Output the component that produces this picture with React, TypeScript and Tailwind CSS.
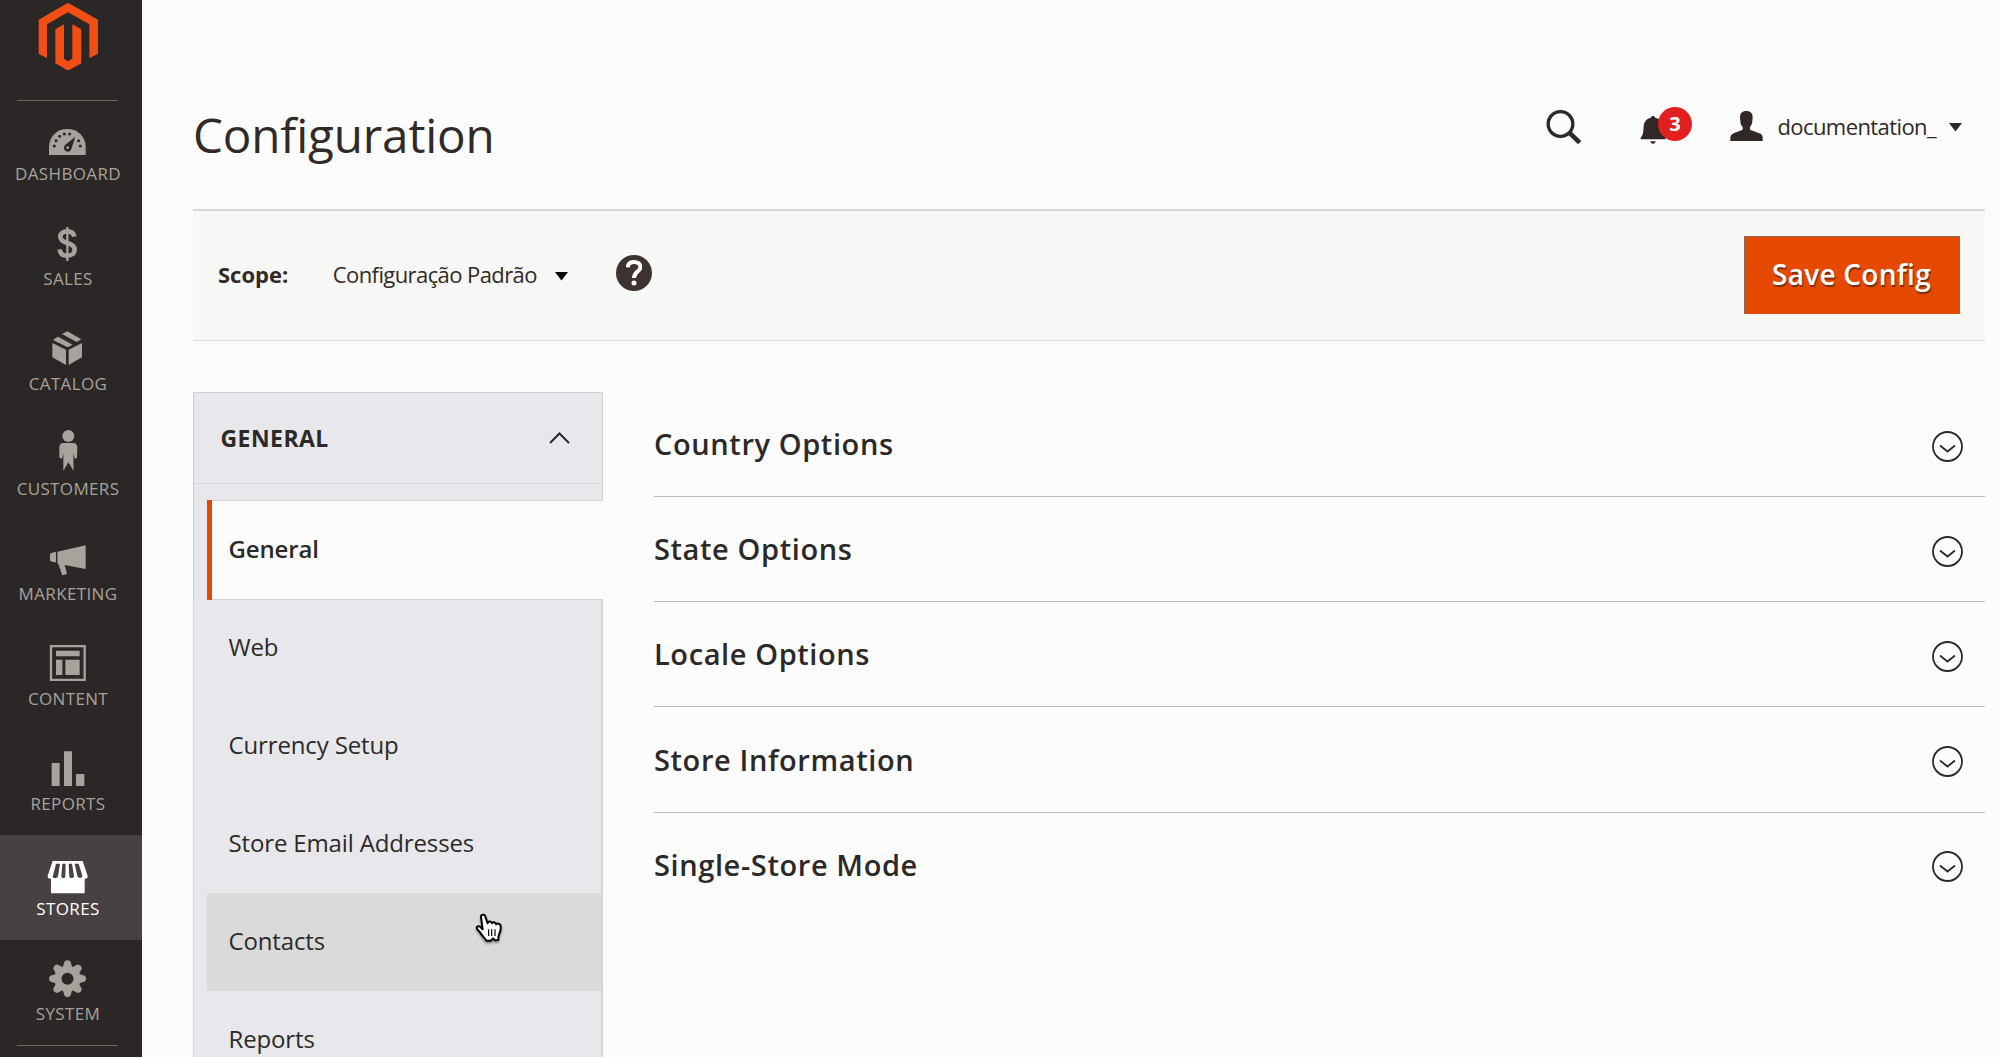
import React from 'react';

type Item = { label: string; viewBox: string; art: React.ReactNode; active?: boolean };

function Gear() {
  return (
    <g fill="currentColor" transform="translate(202.500 1076)">
      {[0, 45, 90, 135, 180, 225, 270, 315].map((a) => (
        <path key={a} transform={`rotate(${a})`} d="M-15 -32L-8.500 -52Q0 -59 8.500 -52L15 -32z" />
      ))}
      <path fillRule="evenodd" d="M0-39a39 39 0 1 0 0 78a39 39 0 1 0 0-78zM0-18a18 18 0 1 1 0 36a18 18 0 1 1 0-36z" />
    </g>
  );
}

const items: Item[] = [
  {
    label: 'DASHBOARD',
    viewBox: '144 360 120 132',
    art: (
      <>
        <path fill="currentColor" d="M147 465v-24c0-31 24-54 55-54s55 23 55 54v24z" />
        <g fill="#2a2726">
          <circle cx="163" cy="438" r="4.500" />
          <circle cx="168" cy="422" r="4.500" />
          <circle cx="179" cy="409" r="4.500" />
          <circle cx="193" cy="402" r="4.500" />
          <circle cx="209" cy="402" r="4.500" />
          <circle cx="236" cy="422" r="4.500" />
          <circle cx="241" cy="438" r="4.500" />
          <path d="M226 410l-12 37c-2 6-7 9-12 8-8-1-12-9-9-16 1-3 3-4 5-6z" />
        </g>
        <circle cx="203" cy="443" r="4" fill="currentColor" />
      </>
    ),
  },
  {
    label: 'SALES',
    viewBox: '144 675 120 132',
    art: (
      <g fill="none" stroke="currentColor">
        <path
          strokeWidth="14"
          d="M223 710c-2-11-10-16-21-16-13 0-21 6-21 16 0 11 9 15 21 19 14 4 22 9 22 20 0 11-9 18-22 18s-22-6-23-19"
        />
        <path strokeWidth="7" d="M202 681v102" />
      </g>
    ),
  },
  {
    label: 'CATALOG',
    viewBox: '144 90 120 132',
    art: (
      <g fill="currentColor">
        <path d="M157 129l41 20v46l-41-23zM246 129l-40 20v46l40-23z" />
        <path d="M202 94l42 24-14 8-44-24zM174 110l44 24-15 8-38-19-6-4z" />
      </g>
    ),
  },
  {
    label: 'CUSTOMERS',
    viewBox: '144 405 120 132',
    art: (
      <g fill="currentColor">
        <circle cx="205" cy="408" r="18" />
        <path d="M190 429h30c7 0 12 5 12 12l-1 32-7 3-4-16 1 53-16-26-15 26v-53l-4 16-8-3v-32c0-7 5-12 12-12z" />
      </g>
    ),
  },
  {
    label: 'MARKETING',
    viewBox: '144 720 120 132',
    art: (
      <path
        fill="currentColor"
        d="M150 763c0-3 8-6 18-7v31c-10 0-18-3-18-6zM172 755l85-19v71l-63-12 7 27-14 4-12-34-3-2z"
      />
    ),
  },
  {
    label: 'CONTENT',
    viewBox: '144 75 120 132',
    art: (
      <>
        <path fill="none" stroke="currentColor" strokeWidth="7" d="M153 78.500h101v101h-101z" />
        <path fill="currentColor" d="M168 92h71v17h-71zM168 119h19v46h-19zM196 119h43v46h-43z" />
      </>
    ),
  },
  {
    label: 'REPORTS',
    viewBox: '144 390 120 132',
    art: <path fill="currentColor" d="M155 429h24v69h-24zM192 394h24v104h-24zM228 462h25v36h-25z" />,
  },
  {
    label: 'STORES',
    viewBox: '144 705 120 132',
    active: true,
    art: (
      <>
        <path fill="currentColor" d="M158 723h90l15 45c1 5-4 9-9 8v44H153v-44c-6 1-11-3-10-8z" />
        <g fill="#474142">
          <path d="M168 731h12l-6 37c-1 7-14 9-16 2 0-1 0-2 1-3z" />
          <path d="M187 731h10l-1 38c0 7-12 7-12 0z" />
          <path d="M206 731h10l6 38c0 7-14 7-14 0z" />
          <path d="M224 731h12l11 36c2 8-13 9-15 1z" />
        </g>
      </>
    ),
  },
  { label: 'SYSTEM', viewBox: '144 1020 120 132', art: <Gear /> },
];

function Logo() {
  return (
    <svg className="ml-[38px] h-[70px] w-[61px]" viewBox="114 0 183 210" fill="#f04e14">
      <path d="M204 8l90 51v102l-26 14V73l-64-36-63 36v102l-25-14V59z" />
      <path d="M166 88l26-15v103l12 8 13-8V73l27 15v102l-40 22-38-22z" />
    </svg>
  );
}

function Sidebar() {
  return (
    <aside className="w-[142px] shrink-0 overflow-hidden bg-[#2a2726] text-[#a8a29d]">
      <div className="h-[100px]">
        <Logo />
      </div>
      <div className="-mb-px ml-[17px] h-px w-[101px] bg-[#74665a]" />
      {items.map((it) => (
        <div
          key={it.label}
          className={
            it.active
              ? 'flex h-[105px] flex-col items-center bg-[#474142] pr-[6px] pt-[20px] text-white'
              : 'flex h-[105px] flex-col items-center pr-[6px] pt-[20px]'
          }
        >
          <svg className="h-[44px] w-[40px] overflow-visible" viewBox={it.viewBox}>
            {it.art}
          </svg>
          <span className="text-[17px] leading-[20px] tracking-[0.35px]">{it.label}</span>
        </div>
      ))}
      <div className="ml-[17px] h-px w-[101px] bg-[#74665a]" />
    </aside>
  );
}

function Caret() {
  return (
    <svg className="h-[9px] w-[13px]" viewBox="0 0 13 9" fill="currentColor">
      <path d="M0 0h13L6.500 8.500z" />
    </svg>
  );
}

function Header() {
  return (
    <header className="flex h-[209px] items-start">
      <h1 className="mt-[105px] text-[47.6px] leading-[60px] tracking-[-0.15px] text-[#312a26]">Configuration</h1>
      <div className="ml-auto mt-[100px] flex h-[52px] items-center pr-[23px] text-[#2f2825]">
        <svg className="mt-[2px] h-[35px] w-[36px]" viewBox="134 90 108 105" fill="none" stroke="currentColor">
          <circle cx="177.500" cy="132" r="37" strokeWidth="10" />
          <path strokeWidth="14" d="M204 158l31 30" />
        </svg>
        <div className="relative ml-[58px] h-[36px] w-[53px]">
          <svg className="h-[36px] w-[53px]" viewBox="415 80 159 108" fill="currentColor">
            <path d="M454 104c4 0 6 2 6 5 15 3 22 12 23 26 1 18 3 28 9 34v5h-75v-5c7-6 8-16 9-34 1-14 8-23 22-26 0-3 2-5 6-5zM446 180h16c-1 10-15 10-16 0z" />
          </svg>
          <span className="absolute -top-px left-[18px] flex h-[34px] w-[34px] items-center justify-center rounded-full bg-[#e22020] text-[20px] font-bold text-white">
            3
          </span>
        </div>
        <svg className="ml-[37px] h-[30px] w-[33px]" viewBox="688 90 99 90" fill="currentColor">
          <path d="M737 90c13 0 19 7 19 19l-1 10c0 9-3 14-7 18v9l26 10c9 3 12 7 12 16v8h-97v-8c0-9 4-13 12-16l25-10v-9c-5-4-7-9-7-18l-1-10c0-12 6-19 19-19z" />
        </svg>
        <span className="ml-[14.500px] text-[22px] tracking-[-0.59px]">documentation_</span>
        <span className="ml-[13px] mt-[3px]">
          <Caret />
        </span>
      </div>
    </header>
  );
}

function ScopeBar() {
  return (
    <div className="flex h-[132px] items-center border-b border-t-2 border-b-[#dadada] border-t-[#d8d8d8] bg-[#f7f7f6] pb-[2px] pl-[25px] pr-[25px] text-[22px] text-[#312a26]">
      <span className="font-bold">Scope:</span>
      <span className="ml-[44.500px] tracking-[-0.59px]">Configuração Padrão</span>
      <span className="ml-[18px] mt-[3px] text-black">
        <Caret />
      </span>
      <span className="-mt-[3px] ml-[48px] flex size-[36px] items-center justify-center rounded-full bg-[#3d3431]">
        <svg className="h-[26px] w-[16px]" viewBox="0 0 48 78" fill="none">
          <path stroke="#fff" strokeWidth="12" d="M5 22c1-11 8-16 19-16 12 0 19 6 19 15 0 14-19 14-19 33" />
          <circle cx="24" cy="69" r="7.500" fill="#fff" />
        </svg>
      </span>
      <button className="ml-auto h-[78px] w-[216px] border-l border-t border-[#8a6a55] bg-[#e64a00] pb-[2px] pr-[2px] text-[28px] font-semibold tracking-[0.25px] text-white [text-shadow:1px_2px_1px_rgba(70,35,20,0.7)]">
        Save Config
      </button>
    </div>
  );
}

const links = ['Web', 'Currency Setup', 'Store Email Addresses', 'Contacts', 'Reports'];

function Hand() {
  return (
    <svg
      className="absolute left-[268px] top-[20px] h-[32px] w-[30px] drop-shadow-[0_2px_1px_rgba(0,0,0,0.35)]"
      viewBox="226 216 90 96"
    >
      <path
        fill="#fff"
        stroke="#000"
        strokeWidth="6"
        strokeLinejoin="round"
        d="M244 228c-1-8 11-9 13-2l7 21c0-7 11-7 13 0 2-5 11-4 12 3 3-4 13-2 14 5 1 8 0 14-3 21-3 6-4 9-4 15v6l-10 1-6-6-6 7h-14c-6-8-14-18-19-25-4-5-10-10-10-14 1-6 9-6 14 1l4 4z"
      />
      <path stroke="#000" strokeWidth="3.500" d="M267 265v20M276 265v20M286 265v20" />
    </svg>
  );
}

function ConfigNav() {
  return (
    <nav className="w-[410px] shrink-0 text-[24px] tracking-[-0.14px] text-[#2c2a28]">
      <div className="h-[92px] border-x border-t border-[#d0d0d3] bg-[#e8e7eb]">
        <div className="flex h-[91px] items-center justify-between border-b border-[#d8d8da] pl-[26.500px] pr-[32px]">
          <span className="text-[23px] font-bold tracking-[0.45px]">GENERAL</span>
          <svg className="h-[12px] w-[21px]" viewBox="0 0 21 12" fill="none" stroke="currentColor" strokeWidth="2">
            <path d="M1 11l9.500-9.500L20 11" />
          </svg>
        </div>
      </div>
      <div className="h-[16px] border-x border-[#d0d0d3] bg-[#e8e7eb]" />
      <div className="flex h-[99px] border-l border-[#d0d0d3] bg-[#e8e7eb] pl-[13px]">
        <div className="flex h-[100px] flex-1 items-center border-l-[5px] border-[#e64a00] bg-[#fcfcfd]">
          <div className="flex h-full flex-1 items-center border-y border-[#d4d4d6] pb-[3px] pl-[16.500px] font-semibold">
            General
          </div>
        </div>
      </div>
      {links.map((l) => (
        <div key={l} className="border-l border-r-2 border-[#d6d6d9] bg-[#e8e7eb] pl-[13px]">
          <div
            className={
              l === 'Contacts'
                ? 'relative flex h-[97.9px] items-center bg-[#dadadb] pb-px pl-[21.500px]'
                : 'flex h-[97.9px] items-center pb-px pl-[21.500px]'
            }
          >
            {l}
            {l === 'Contacts' && <Hand />}
          </div>
        </div>
      ))}
    </nav>
  );
}

const sections = ['Country Options', 'State Options', 'Locale Options', 'Store Information', 'Single-Store Mode'];

function Sections() {
  return (
    <div className="ml-[51px] flex-1">
      {sections.map((s, i) => (
        <div
          key={s}
          className={
            i < 4
              ? 'flex h-[105.15px] items-center justify-between border-b border-[#bdbdc1] pr-[22px]'
              : 'flex h-[105.15px] items-center justify-between border-b border-transparent pr-[22px]'
          }
        >
          <span className="pb-[0.4px] text-[29px] font-semibold tracking-[0.6px] text-[#2c2a28]">{s}</span>
          <svg className="mt-[4px] size-[31px]" viewBox="0 0 31 31" fill="none" stroke="#2c2a28">
            <circle cx="15.500" cy="15.500" r="14.500" strokeWidth="1.800" />
            <path strokeWidth="1.800" d="M8 14.500l7.500 6 7.500-6" />
          </svg>
        </div>
      ))}
    </div>
  );
}

export default function App() {
  return (
    <div className="h-[1058px] w-[1999px] overflow-hidden bg-white font-['Open_Sans',sans-serif]">
      <div className="flex h-[1057px] overflow-hidden bg-[#fcfcfd]">
        <Sidebar />
        <main className="ml-[51px] mr-[14px] min-w-0 flex-1">
          <Header />
          <ScopeBar />
          <div className="flex items-start pt-[51px]">
            <ConfigNav />
            <Sections />
          </div>
        </main>
      </div>
    </div>
  );
}
